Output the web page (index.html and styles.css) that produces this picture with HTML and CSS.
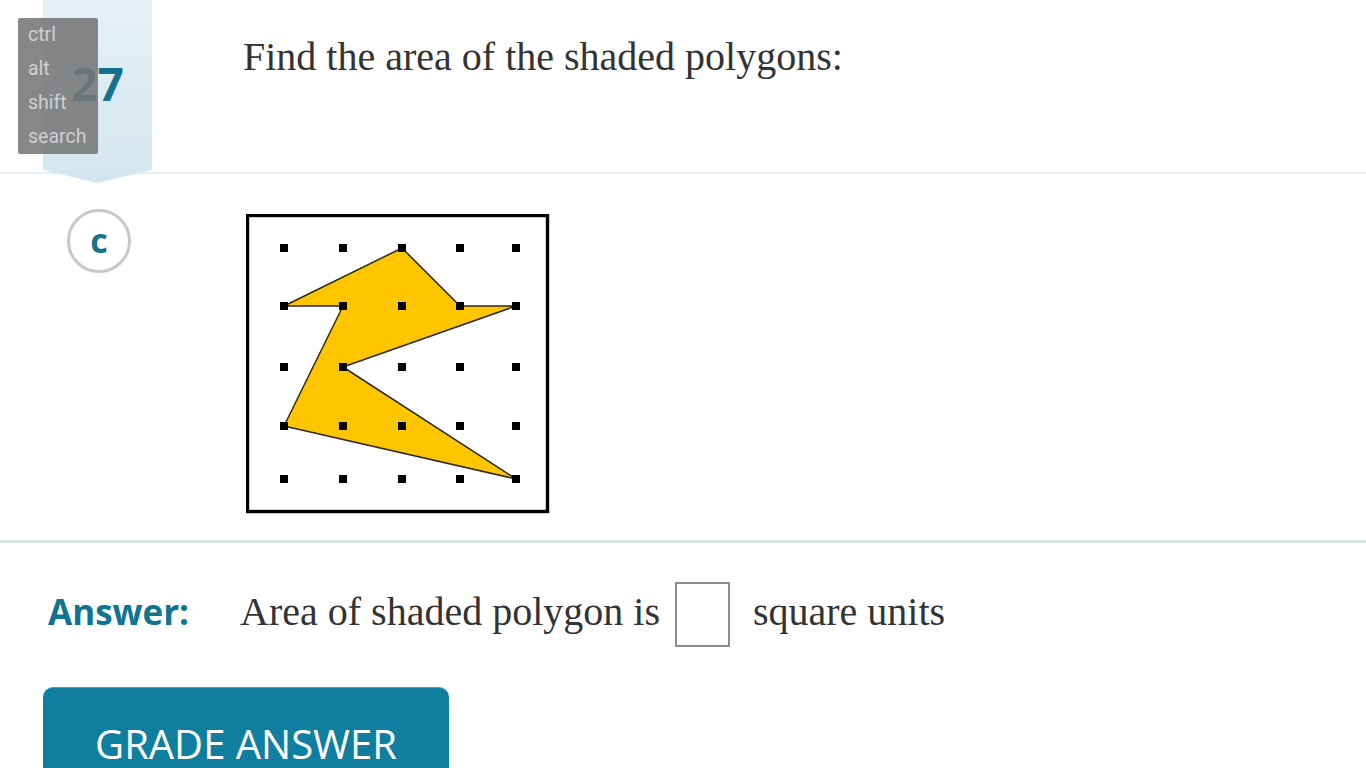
FILE: index.html
```html
<!DOCTYPE html>
<html>
<head>
<meta charset="utf-8">
<link rel="stylesheet" href="styles.css">
</head>
<body>
<div class="head">
  <div class="ribbon"><span class="num">27</span></div>
  <h1 class="title">Find the area of the shaded polygons:</h1>
  <div class="keys">
    <div>ctrl</div>
    <div>alt</div>
    <div>shift</div>
    <div>search</div>
  </div>
</div>
<div class="part">
  <div class="part-col"><div class="badge">c</div></div>
  <div class="figure">
    <svg width="304" height="300" viewBox="246 214 304 300">
      <rect x="247.5" y="215.5" width="300" height="296" fill="#fff" stroke="#000" stroke-width="3.4"/>
      <polygon points="284,306 402,248 460,306 516,306 343,367 516,479 284,426 343,306" fill="#ffc600" stroke="#2e2a1c" stroke-width="1.5" stroke-linejoin="round"/>
      <g fill="#000">
        <rect x="280" y="244" width="8" height="8"/><rect x="339" y="244" width="8" height="8"/><rect x="398" y="244" width="8" height="8"/><rect x="456" y="244" width="8" height="8"/><rect x="512" y="244" width="8" height="8"/>
        <rect x="280" y="302" width="8" height="8"/><rect x="339" y="302" width="8" height="8"/><rect x="398" y="302" width="8" height="8"/><rect x="456" y="302" width="8" height="8"/><rect x="512" y="302" width="8" height="8"/>
        <rect x="280" y="363" width="8" height="8"/><rect x="339" y="363" width="8" height="8"/><rect x="398" y="363" width="8" height="8"/><rect x="456" y="363" width="8" height="8"/><rect x="512" y="363" width="8" height="8"/>
        <rect x="280" y="422" width="8" height="8"/><rect x="339" y="422" width="8" height="8"/><rect x="398" y="422" width="8" height="8"/><rect x="456" y="422" width="8" height="8"/><rect x="512" y="422" width="8" height="8"/>
        <rect x="280" y="475" width="8" height="8"/><rect x="339" y="475" width="8" height="8"/><rect x="398" y="475" width="8" height="8"/><rect x="456" y="475" width="8" height="8"/><rect x="512" y="475" width="8" height="8"/>
      </g>
    </svg>
  </div>
</div>
<div class="answer">
  <span class="label">Answer:</span>
  <span class="text">Area of shaded polygon is</span>
  <span class="box"></span>
  <span class="text">square units</span>
</div>
<div class="actions">
  <button class="grade">GRADE ANSWER</button>
</div>
</body>
</html>
```
FILE: styles.css
```css
html, body {
  margin: 0;
  padding: 0;
  background: #fff;
}
body {
  width: 1366px;
  height: 768px;
  overflow: hidden;
}
.head {
  position: relative;
  display: flex;
  align-items: flex-start;
  height: 172px;
  border-bottom: 2px solid #e6f0f3;
}
.ribbon {
  position: relative;
  z-index: 1;
  margin-left: 43px;
  width: 109px;
  height: 183px;
  flex: none;
  background: linear-gradient(#e6f1f6, #d3e6ee);
  clip-path: polygon(0 0, 100% 0, 100% 170px, 50% 183px, 0 170px);
  display: flex;
  justify-content: center;
}
.num {
  margin-top: 51px;
  font-family: "Open Sans", sans-serif;
  font-weight: 700;
  font-size: 46px;
  line-height: 64px;
  color: #16728f;
}
.title {
  margin: 37px 0 0 91px;
  font-family: "Liberation Serif", serif;
  font-weight: 400;
  font-size: 40px;
  line-height: 40px;
  color: #333;
}
.keys {
  position: absolute;
  z-index: 2;
  left: 18px;
  top: 18px;
  width: 70px;
  padding-left: 10px;
  background: rgba(118, 118, 118, 0.88);
  border-radius: 2px;
  font-family: Roboto, sans-serif;
  font-size: 19.5px;
  line-height: 34px;
  color: #cfcfcf;
  white-space: nowrap;
}
.part {
  display: flex;
  border-bottom: 3px solid #d5e6e6;
  padding: 40px 0 26px;
}
.part-col {
  width: 246px;
  flex: none;
}
.badge {
  margin: -5px 0 0 67px;
  width: 58px;
  height: 56px;
  padding-bottom: 2px;
  border: 3px solid #c8c8c8;
  border-radius: 50%;
  display: flex;
  align-items: center;
  justify-content: center;
  font-family: "Open Sans", sans-serif;
  font-weight: 700;
  font-size: 34px;
  line-height: 1;
  color: #16728f;
}
.figure svg {
  display: block;
}
.answer {
  display: flex;
  align-items: center;
  height: 144px;
  padding-left: 48px;
  padding-bottom: 8px;
  box-sizing: border-box;
}
.label {
  font-family: "Open Sans", sans-serif;
  font-weight: 700;
  font-size: 35px;
  color: #0f7392;
  margin-right: 51px;
}
.text {
  font-family: "Liberation Serif", serif;
  font-size: 40px;
  color: #333;
}
.box {
  width: 51px;
  height: 61px;
  border: 2px solid #8c8c8c;
  margin: 6px 23px 0 15px;
}
.actions {
  padding-left: 43px;
}
.grade {
  display: block;
  width: 406px;
  height: 110px;
  border: 0;
  border-top: 1px solid #4aa0bb;
  border-radius: 10px;
  background: #107e9f;
  color: #fff;
  font-family: "Open Sans", sans-serif;
  font-size: 40px;
  line-height: 56px;
  padding: 0;
  text-align: center;
  display: flex;
  align-items: flex-start;
  justify-content: center;
  padding-top: 28px;
  box-sizing: border-box;
}
```
